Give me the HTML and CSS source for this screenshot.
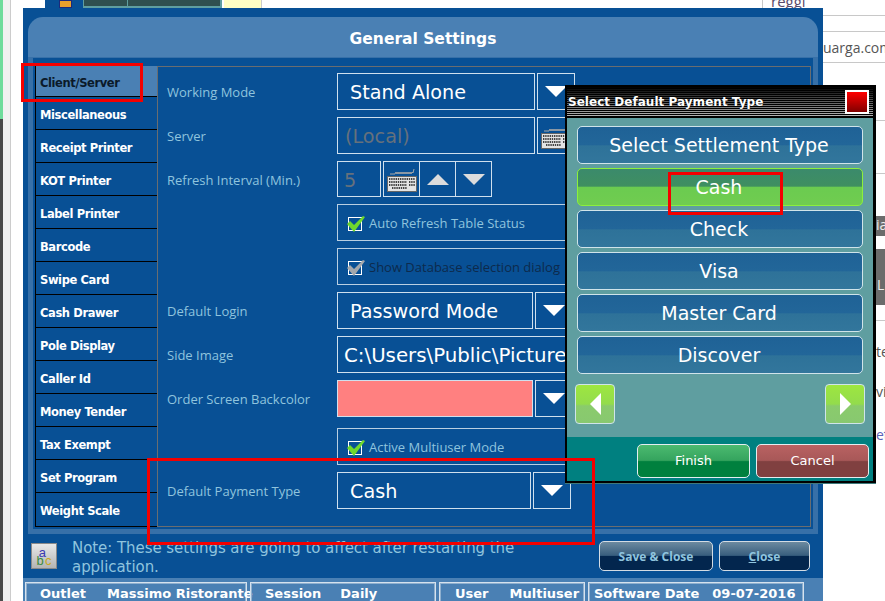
FILE: index.html
```html
<!DOCTYPE html>
<html lang="en">
<head>
<meta charset="utf-8">
<title>General Settings</title>
<link rel="stylesheet" href="styles.css">
</head>
<body>
<svg class="defs" width="0" height="0" aria-hidden="true">
  <defs>
    <symbol id="kbd" viewBox="0 0 30 26">
      <path d="M3 8 H8 L9 6 L10 8 L11 6 L12 8 L13 6 L14 8 L15 6 L16 8 L17 6 L18 8 L19 6 L20 8 L21 6 L22 8 L23 6 L24 8 L25 6 L26 7 L27 3" fill="none" stroke="#a8a8a8" stroke-width="1"/>
      <rect x="0.5" y="10.5" width="29" height="15" fill="#e4e4e4" stroke="#666"/>
      <path d="M2 13 H28 M2 16 H20 M22 16 H28 M2 19 H20 M22 19 H28 M5 22 H20" stroke="#444" stroke-width="1.8" stroke-dasharray="1.4 .8"/>
    </symbol>
    <symbol id="tick" viewBox="0 0 18 16">
      <path d="M0 8 L3 5 L7 9 L16 0 L18 1 L7 16 Z"/>
    </symbol>
  </defs>
</svg>

<div class="scrap green-strip"></div>
<div class="scrap dark-strip"></div>
<div class="scrap pale-strip"></div>
<div class="scrap top-blue"><span class="top-icon"></span></div>
<div class="scrap top-teal"><span class="cell-a"></span><span class="cell-b"></span></div>
<div class="scrap top-yellow"></div>
<div class="scrap vline"></div>
<div class="scrap reggi">reggi</div>
<div class="scrap hr hr1"></div>
<div class="scrap hr hr2"></div>
<div class="scrap hr hr3"></div>
<div class="scrap hr hr4"></div>
<div class="scrap hr hr5"></div>
<div class="scrap hr hr6"></div>
<div class="scrap mail">uarga.com</div>
<div class="scrap gray g1">ia</div>
<div class="scrap gray g2">L</div>
<div class="scrap frag f1">te</div>
<div class="scrap frag f2">vi</div>
<div class="scrap frag f3">ete</div>

<main class="win">
  <header class="band">General Settings</header>
  <section class="frame">
    <nav class="tabs">
      <div class="tab is-active">Client/Server</div>
      <div class="tab">Miscellaneous</div>
      <div class="tab">Receipt Printer</div>
      <div class="tab">KOT Printer</div>
      <div class="tab">Label Printer</div>
      <div class="tab">Barcode</div>
      <div class="tab">Swipe Card</div>
      <div class="tab">Cash Drawer</div>
      <div class="tab">Pole Display</div>
      <div class="tab">Caller Id</div>
      <div class="tab">Money Tender</div>
      <div class="tab">Tax Exempt</div>
      <div class="tab">Set Program</div>
      <div class="tab">Weight Scale</div>
    </nav>
    <div class="pane">
      <div class="row">
        <label class="lbl">Working Mode</label>
        <div class="field w198">Stand Alone</div>
        <div class="btn w38"><i class="tri down"></i></div>
      </div>
      <div class="row">
        <label class="lbl">Server</label>
        <div class="field w198 muted small-pad">(Local)</div>
        <div class="btn w38"><svg class="kbd"><use href="#kbd"/></svg></div>
      </div>
      <div class="row short">
        <label class="lbl">Refresh Interval (Min.)</label>
        <div class="field w44 muted num">5</div>
        <div class="group">
          <div class="btn w37"><svg class="kbd"><use href="#kbd"/></svg></div>
          <div class="btn w37 joined"><i class="tri up dim"></i></div>
          <div class="btn w37 joined"><i class="tri down dim"></i></div>
        </div>
      </div>
      <div class="row">
        <span class="lbl"></span>
        <div class="check"><span class="box"><svg class="tick"><use href="#tick"/></svg></span>Auto Refresh Table Status</div>
      </div>
      <div class="row">
        <span class="lbl"></span>
        <div class="check off"><span class="box"><svg class="tick"><use href="#tick"/></svg></span>Show Database selection dialog</div>
      </div>
      <div class="row">
        <label class="lbl">Default Login</label>
        <div class="field w196">Password Mode</div>
        <div class="btn w38"><i class="tri down"></i></div>
      </div>
      <div class="row">
        <label class="lbl">Side Image</label>
        <div class="field w240 path">C:\Users\Public\Pictures</div>
      </div>
      <div class="row">
        <label class="lbl">Order Screen Backcolor</label>
        <div class="field w196 swatch"></div>
        <div class="btn w38"><i class="tri down"></i></div>
      </div>
      <div class="row spaced">
        <span class="lbl"></span>
        <div class="check"><span class="box"><svg class="tick"><use href="#tick"/></svg></span>Active Multiuser Mode</div>
      </div>
      <div class="row">
        <label class="lbl">Default Payment Type</label>
        <div class="field w194">Cash</div>
        <div class="btn w38"><i class="tri down"></i></div>
      </div>
    </div>
  </section>
  <section class="note">
    <div class="abc"><span class="l-b">b</span><span class="l-a">a</span><span class="l-c">c</span></div>
    <p class="note-text">Note: These settings are going to affect after restarting the application.</p>
    <div class="actions">
      <button class="dark w114">Save &amp; Close</button>
      <button class="dark w91"><u>C</u>lose</button>
    </div>
  </section>
  <footer class="status">
    <div class="cell c1"><span>Outlet</span><span>Massimo Ristorante</span></div>
    <div class="cell c2"><span>Session</span><span>Daily</span></div>
    <div class="cell c3"><span>User</span><span>Multiuser</span></div>
    <div class="cell c4"><span>Software Date</span><span>09-07-2016</span></div>
  </footer>
</main>

<aside class="dialog">
  <div class="dlg-title">
    <span>Select Default Payment Type</span>
    <span class="dlg-close"></span>
  </div>
  <div class="dlg-body">
    <div class="opt">Select Settlement Type</div>
    <div class="opt is-on">Cash</div>
    <div class="opt">Check</div>
    <div class="opt">Visa</div>
    <div class="opt">Master Card</div>
    <div class="opt">Discover</div>
    <div class="pager">
      <div class="page"><i class="tri left"></i></div>
      <div class="page"><i class="tri right"></i></div>
    </div>
  </div>
  <div class="dlg-foot">
    <button class="act finish">Finish</button>
    <button class="act cancel">Cancel</button>
  </div>
</aside>

<div class="mark m1"></div>
<div class="mark m2"></div>
<div class="mark m3"></div>
</body>
</html>
```

FILE: styles.css
```css
* { box-sizing: border-box; }
html, body { margin: 0; height: 601px; overflow: hidden; background: #fff; }
body { position: relative; width: 885px; font-family: "DejaVu Sans", sans-serif; }
.defs { position: absolute; }

/* desktop behind the windows */
.scrap { position: absolute; }
.green-strip { left: 0; top: 0; width: 3px; height: 119px; background: #6fdc9c; }
.dark-strip { left: 0; top: 119px; width: 3px; height: 482px; background: #4a4a4a; }
.pale-strip { left: 3px; top: 0; width: 8px; height: 601px; background: #f1f1f1; border-right: 1px solid #ccc; }
.top-blue { left: 45px; top: 0; width: 38px; height: 8px; background: #085095; }
.top-icon { display: block; width: 13px; height: 8px; margin-left: 14px; background: #e8a02c; border: 1px solid #1c2a7c; }
.top-teal { left: 83px; top: 0; width: 139px; height: 8px; display: flex; gap: 1px; background: #5f9ea0; padding: 0 1px; }
.cell-a, .cell-b { background: #2f4f4f; height: 6px; }
.cell-a { width: 43px; }
.cell-b { width: 92px; }
.top-yellow { left: 224px; top: 0; width: 38px; height: 8px; background: #ffffc4; border-right: 1px solid #ccc; }
.vline { left: 762px; top: 0; width: 1px; height: 8px; background: #c8c8c8; }
.reggi { left: 771px; top: -7px; font: 15px/16px "Open Sans", sans-serif; color: #5a4a6a; }
.hr { left: 823px; right: 0; height: 1px; background: #c8c8c8; }
.hr1 { top: 15px; }
.hr2 { top: 31px; }
.hr3 { top: 62px; }
.hr4 { top: 120px; }
.hr5 { top: 173px; }
.hr6 { top: 320px; }
.mail { left: 823px; top: 38px; font: 14px/20px "Open Sans", sans-serif; color: #555; white-space: nowrap; }
.gray { left: 876px; width: 9px; background: #6b6b6b; color: #eee; font: 14px/18px "Open Sans", sans-serif; overflow: hidden; }
.g1 { top: 216px; height: 20px; }
.g2 { top: 249px; height: 56px; padding: 27px 0 0 1px; }
.frag { left: 876px; font: 14px/18px "Open Sans", sans-serif; color: #555; }
.f1 { top: 343px; }
.f2 { top: 383px; }
.f3 { top: 426px; color: #5a62b8; }

/* main window */
.win { position: absolute; left: 23px; top: 8px; width: 800px; height: 593px; background: #085095; padding: 9px 5px 0; overflow: hidden; }
.band { height: 41px; background: #4a80b4; border-radius: 15px 15px 0 0; border-bottom: 1px solid #3770a8; color: #fff; font-size: 15.5px; font-weight: 700; text-align: center; line-height: 45px; }
.frame { height: 476px; border: 5px solid #3770a8; border-top: 0; padding: 8px 2px 0; display: flex; align-items: flex-start; box-shadow: inset 0 0 0 1px #085095; }
.tabs { width: 122px; flex: none; border-left: 1px solid #000; border-bottom: 1px solid #000; }
.tab { height: 33px; border-bottom: 1px solid #000; color: #fff; font-size: 11.5px; letter-spacing: -0.4px; font-weight: 700; padding: 3px 0 0 4px; line-height: 31px; }
.tab:first-child { height: 31px; padding-top: 2px; line-height: 30px; }
.tab:last-child { border-bottom: 0; }
.tab.is-active { background: #4a80b4; color: #0b1a2a; }
.pane { width: 654px; height: 461px; border: 1px solid #6a6d70; padding: 6px 0 0 9px; display: flex; flex-direction: column; gap: 7px; }
.row { display: flex; height: 37px; gap: 2px; align-items: stretch; flex: none; }
.row.short { height: 36px; }
.row.spaced { margin-top: 4px; }
.lbl { width: 168px; flex: none; font: 13px/39px "Open Sans", sans-serif; color: #8fc4de; white-space: nowrap; }
.field { border: 1px solid #cfe0ee; color: #fff; font-size: 19.2px; line-height: 37px; padding-left: 12px; white-space: nowrap; overflow: hidden; }
.w198 { width: 198px; }
.w196 { width: 196px; }
.w194 { width: 194px; }
.w240 { width: 240px; }
.w44 { width: 44px; }
.muted { color: #66717c; }
.small-pad { padding-left: 7px; }
.num { padding-left: 6px; }
.path { padding-left: 6px; font-size: 19.8px; }
.swatch { background: #ff8080; }
.btn { border: 1px solid #cfe0ee; display: flex; align-items: center; justify-content: center; flex: none; }
.w38 { width: 38px; }
.w37 { width: 37px; }
.joined { margin-left: -1px; }
.group { display: flex; }
.kbd { width: 30px; height: 26px; fill: none; }
.tri { display: block; width: 0; height: 0; border-style: solid; border-color: transparent; }
.tri.down { border-width: 11px 11px 0; border-top-color: #fff; }
.tri.up { border-width: 0 11px 11px; border-bottom-color: #fff; }
.tri.dim.down { border-top-color: #dcdcdc; }
.tri.dim.up { border-bottom-color: #dcdcdc; }
.tri.left { border-width: 11px 11px 11px 0; border-right-color: #fff; }
.tri.right { border-width: 11px 0 11px 11px; border-left-color: #fff; }
.check { width: 236px; border: 1px solid #b9cfe2; display: flex; align-items: center; gap: 7px; padding: 2px 0 0 10px; font: 13px/1 "Open Sans", sans-serif; color: #8fc4de; white-space: nowrap; overflow: hidden; flex: none; }
.check.off { color: #0d2a4c; }
.box { width: 14px; height: 14px; border: 1px solid #fff; display: block; flex: none; position: relative; }
.tick { position: absolute; left: -2px; top: -2px; width: 18px; height: 16px; fill: #6fd82c; }
.off .tick { fill: #a4a8ac; }

/* note line */
.note { height: 44px; display: flex; align-items: flex-start; padding: 2px 8px 0 3px; }
.abc { width: 26px; height: 26px; margin-top: 7px; flex: none; background: linear-gradient(#e8e8e8, #b4b4b4); border: 1px solid #8a8a8a; display: flex; align-items: flex-end; justify-content: center; font: 13px/12px "Liberation Sans", sans-serif; }
.l-b { color: #3c8a3c; margin-bottom: 1px; }
.l-a { color: #3a3ab4; margin: 0 -1px 9px -5px; }
.l-c { color: #c8a820; margin-bottom: 1px; }
.note-text { margin: 3px 0 0 15px; width: 476px; font-size: 15px; letter-spacing: -0.06px; line-height: 19px; color: #8fc4de; flex: none; }
.actions { display: flex; gap: 6px; margin: 5px 0 0 auto; }
.dark { height: 30px; border: 1px solid #d4dce4; border-radius: 5px; background: linear-gradient(#6c8aa0 0, #385e7e 48%, #03264e 50%, #03264e 100%); color: #8fc4de; font: 700 12px "Open Sans", sans-serif; padding: 0; }
.w114 { width: 114px; }
.w91 { width: 91px; }

.status { height: 30px; margin: 0 -5px; background: #4a80b4; padding: 4px 2px 0; display: flex; gap: 3px; }
.cell { height: 30px; border: 1px solid #d6e2ee; box-shadow: inset 0 0 0 1px #8fb0cf; color: #fff; font-size: 13px; font-weight: 700; display: flex; padding-top: 3px; white-space: nowrap; }
.c1 { width: 222px; padding-left: 14px; gap: 21px; }
.c2 { width: 186px; padding-left: 14px; gap: 19px; }
.c3 { width: 146px; padding-left: 15px; gap: 21px; }
.c4 { width: 216px; padding-left: 5px; gap: 13px; }

/* popup */
.dialog { position: absolute; left: 565px; top: 85px; width: 311px; height: 398px; border: 2px solid #000; border-right-width: 3px; background: #5f9ea0; display: flex; flex-direction: column; box-shadow: 0 1px 0 #3e7a7c; }
.dlg-title { height: 31px; flex: none; border-bottom: 2px solid #000; background: repeating-linear-gradient(transparent 0, transparent 1px, #000 1px, #000 2px), linear-gradient(#000, #b4b4b4); display: flex; align-items: center; justify-content: space-between; padding: 0 4px 0 1px; color: #fff; font-size: 12px; letter-spacing: 0.03px; font-weight: 700; text-shadow: 0 0 2px #000; white-space: nowrap; }
.dlg-close { width: 24px; height: 24px; border: 2px solid #fff; background: linear-gradient(#f00, #800000); }
.dlg-body { flex: 1; padding: 8px 10px 0; display: flex; flex-direction: column; gap: 4px; }
.opt { height: 38px; flex: none; border: 1px solid #d0e4ea; border-radius: 5px; background: linear-gradient(#1f6296 0, #226699 50%, #2e7299 52%, #32769c 100%); color: #fff; font-size: 19px; line-height: 36px; text-align: center; padding-right: 2px; }
.opt.is-on { background: linear-gradient(#3b8a6c 0, #3f8f60 48%, #6bcb50 50%, #70cc50 100%); border-color: #8cf03c; }
.pager { display: flex; justify-content: space-between; margin: 6px -2px 0; }
.page { width: 40px; height: 40px; border: 1px solid #d0e4ea; border-radius: 4px; background: linear-gradient(#9ee640 0, #93dc4c 50%, #8acb6c 55%, #88c870 100%); display: flex; align-items: center; justify-content: center; }
.dlg-foot { height: 44px; flex: none; background: #008080; display: flex; justify-content: flex-end; gap: 6px; padding: 7px 4px 0 0; }
.act { width: 113px; height: 34px; border: 1px solid #e4eef0; border-radius: 5px; color: #fff; font: 13px "DejaVu Sans", sans-serif; padding: 0 0 2px; }
.finish { background: linear-gradient(#4cba70 0, #35a45e 48%, #00803e 52%, #00803e 100%); }
.cancel { background: linear-gradient(#b96262 0, #a85858 48%, #804040 52%, #804040 100%); }

/* red annotations */
.mark { position: absolute; border: 3px solid #f40000; }
.m1 { left: 21px; top: 63px; width: 122px; height: 39px; }
.m2 { left: 668px; top: 172px; width: 115px; height: 43px; }
.m3 { left: 147px; top: 458px; width: 448px; height: 87px; }
```
